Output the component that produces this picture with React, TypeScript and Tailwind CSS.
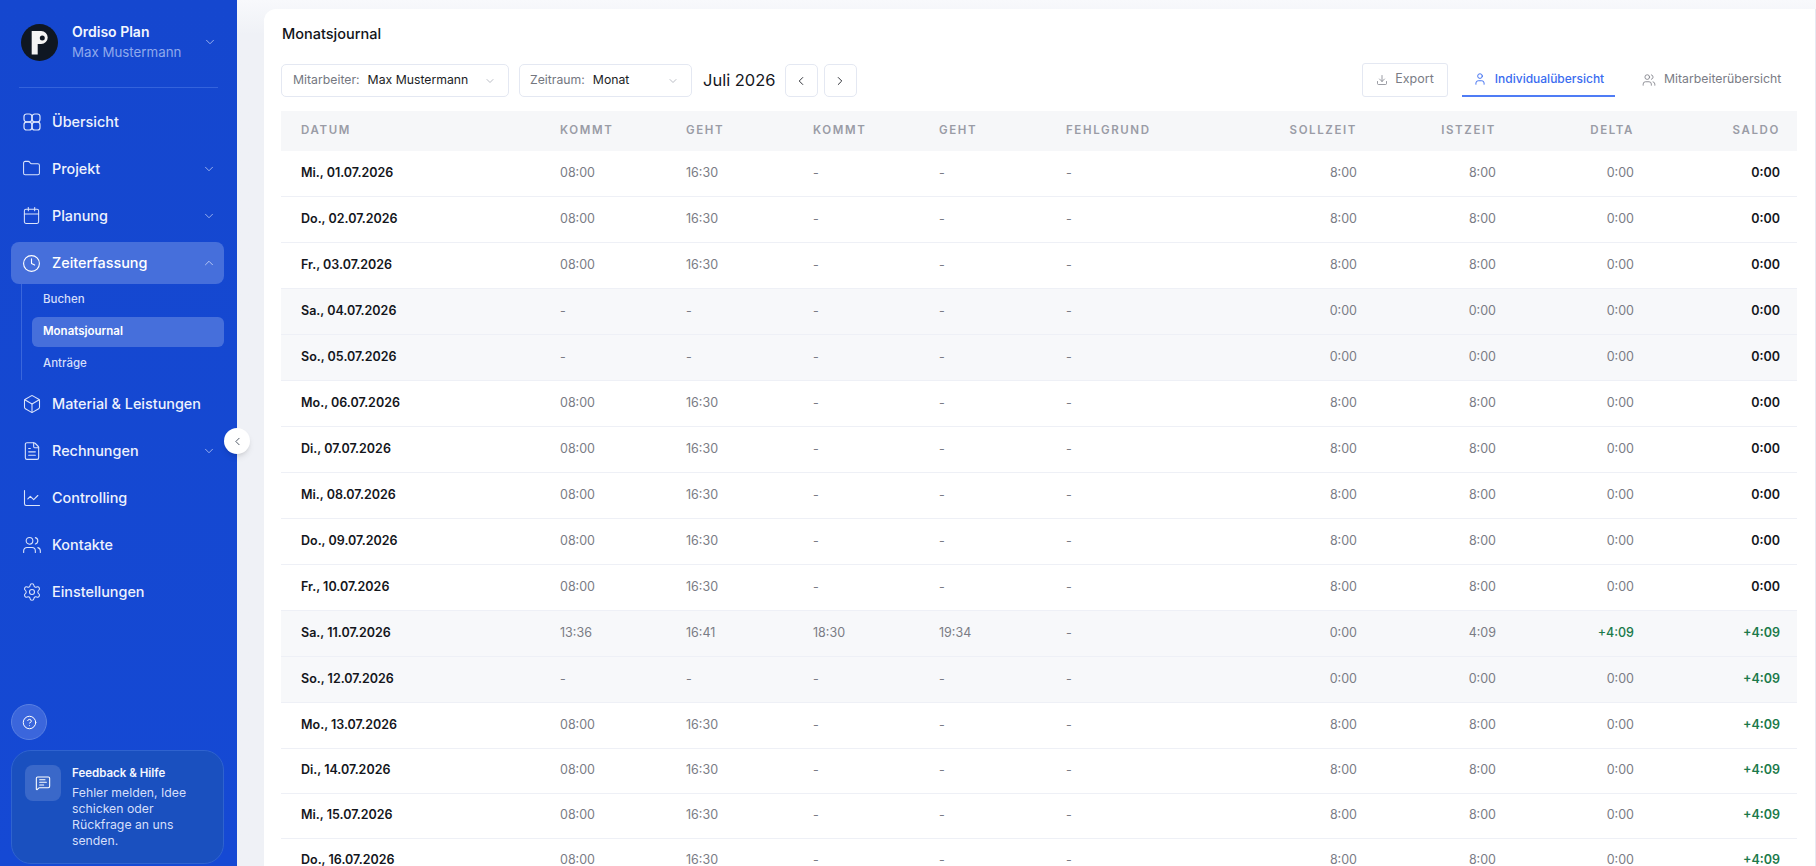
import React from "react";
import {
  Box,
  Calendar,
  ChartLine,
  ChevronDown,
  ChevronLeft,
  ChevronRight,
  ChevronUp,
  CircleHelp,
  Clock,
  Download,
  FileText,
  Folder,
  MessageSquareText,
  Settings,
  User,
  Users,
} from "lucide-react";

const OverviewIcon = ({ size = 18 }: { size?: number }) => (
  <svg width={size} height={size} viewBox="0 0 18 18" fill="none" stroke="currentColor" strokeWidth="1.2">
    <rect x="1" y="1" width="7.8" height="7.8" rx="2.6" />
    <rect x="9.2" y="1" width="7.8" height="7.8" rx="2.6" />
    <rect x="1" y="9.2" width="7.8" height="7.8" rx="2.6" />
    <rect x="9.2" y="9.2" width="7.8" height="7.8" rx="2.6" />
  </svg>
);

const Logo = () => (
  <svg width="37" height="37" viewBox="0 0 37 37">
    <circle cx="18.5" cy="18.5" r="18.5" fill="#0f1722" />
    <path d="M10.7 7h9.5a6.5 6.5 0 0 1 0 13h-3.5v10.6h-6z" fill="#f4f4f4" />
    <circle cx="21.3" cy="14" r="2.5" fill="#0f1722" />
  </svg>
);

const navTop = [
  { label: "Übersicht", icon: <OverviewIcon />, chevron: false },
  { label: "Projekt", icon: <Folder size={19} strokeWidth={1.3} />, chevron: true },
  { label: "Planung", icon: <Calendar size={19} strokeWidth={1.3} />, chevron: true },
];

const navBottom = [
  { label: "Material & Leistungen", icon: <Box size={20} strokeWidth={1.3} />, chevron: false },
  { label: "Rechnungen", icon: <FileText size={20} strokeWidth={1.3} />, chevron: true },
  { label: "Controlling", icon: <ChartLine size={20} strokeWidth={1.3} />, chevron: false },
  { label: "Kontakte", icon: <Users size={20} strokeWidth={1.3} />, chevron: false },
  { label: "Einstellungen", icon: <Settings size={20} strokeWidth={1.3} />, chevron: false },
];

type Row = {
  date: string;
  k1: string;
  g1: string;
  k2: string;
  g2: string;
  soll: string;
  ist: string;
  delta: string;
  saldo: string;
  weekend?: boolean;
};

const work = (date: string, saldo: string): Row => ({
  date,
  k1: "08:00",
  g1: "16:30",
  k2: "-",
  g2: "-",
  soll: "8:00",
  ist: "8:00",
  delta: "0:00",
  saldo,
});

const free = (date: string, saldo: string): Row => ({
  date,
  k1: "-",
  g1: "-",
  k2: "-",
  g2: "-",
  soll: "0:00",
  ist: "0:00",
  delta: "0:00",
  saldo,
  weekend: true,
});

const rows: Row[] = [
  work("Mi., 01.07.2026", "0:00"),
  work("Do., 02.07.2026", "0:00"),
  work("Fr., 03.07.2026", "0:00"),
  free("Sa., 04.07.2026", "0:00"),
  free("So., 05.07.2026", "0:00"),
  work("Mo., 06.07.2026", "0:00"),
  work("Di., 07.07.2026", "0:00"),
  work("Mi., 08.07.2026", "0:00"),
  work("Do., 09.07.2026", "0:00"),
  work("Fr., 10.07.2026", "0:00"),
  {
    date: "Sa., 11.07.2026",
    k1: "13:36",
    g1: "16:41",
    k2: "18:30",
    g2: "19:34",
    soll: "0:00",
    ist: "4:09",
    delta: "+4:09",
    saldo: "+4:09",
    weekend: true,
  },
  free("So., 12.07.2026", "+4:09"),
  work("Mo., 13.07.2026", "+4:09"),
  work("Di., 14.07.2026", "+4:09"),
  work("Mi., 15.07.2026", "+4:09"),
  work("Do., 16.07.2026", "+4:09"),
];

const NavItem = ({ label, icon, chevron }: { label: string; icon: React.ReactNode; chevron: boolean }) => (
  <div className="flex h-[47px] items-center pl-[21px] pr-[21px] text-[14.4px] font-medium text-[#eef2fd]">
    <span className="flex w-[21px] justify-center text-[#dbe4fb]">{icon}</span>
    <span className="ml-[10px] flex-1">{label}</span>
    {chevron && <ChevronDown size={14} strokeWidth={1.5} className="text-[#a9bdf2]" />}
  </div>
);

const Sidebar = () => (
  <aside className="relative flex h-full w-[237px] shrink-0 flex-col bg-gradient-to-b from-[#1547cf] to-[#1549d4]">
    <div className="mx-[19px] flex h-[88px] items-center border-b border-[#3463dc] pb-[3px] pl-[2px]">
      <Logo />
      <div className="ml-[14px] flex-1">
        <div className="text-[14px] font-semibold leading-[20px] text-[#f3f6fe]">Ordiso Plan</div>
        <div className="text-[13.3px] leading-[20px] text-[#8fa9ec]">Max Mustermann</div>
      </div>
      <ChevronDown size={14} strokeWidth={1.5} className="mr-[1px] text-[#a9bdf2]" />
    </div>

    <nav className="mt-[10px]">
      {navTop.map((item) => (
        <NavItem key={item.label} {...item} />
      ))}
      <div className="ml-[11px] mr-[13px] mt-[3px] flex h-[42px] items-center rounded-[8px] bg-[#466fdb] pl-[10px] pr-[8px] text-[14.4px] font-medium text-white">
        <span className="flex w-[21px] justify-center">
          <Clock size={19} strokeWidth={1.4} />
        </span>
        <span className="ml-[10px] flex-1">Zeiterfassung</span>
        <ChevronUp size={14} strokeWidth={1.5} className="text-[#c2d0f6]" />
      </div>
      <div className="ml-[21px] mr-[13px] h-[96px] border-l border-[#3a67dc] pl-[10px]">
        <div className="flex h-[33px] items-center pb-[1px] pl-[11px] text-[11.5px] font-medium text-[#d5dffa]">Buchen</div>
        <div className="flex h-[30px] items-center rounded-[6px] bg-[#466fdb] pl-[11px] text-[11.5px] font-semibold text-white">
          Monatsjournal
        </div>
        <div className="flex h-[33px] items-center pl-[11px] text-[11.5px] font-medium text-[#d5dffa]">Anträge</div>
      </div>
      {navBottom.map((item) => (
        <NavItem key={item.label} {...item} />
      ))}
    </nav>

    <div className="mt-auto pb-[2px] pl-[11px] pr-[13px]">
      <div className="flex h-[36px] w-[36px] items-center justify-center rounded-full border border-[#5a80e2] bg-[#3b66dc] text-white">
        <CircleHelp size={15} strokeWidth={1.6} />
      </div>
      <div className="mt-[10px] flex h-[114px] rounded-[20px] border border-[#2f63cf] bg-[#1a50bf] pl-[13px] pt-[14px]">
        <div className="flex h-[36px] w-[36px] shrink-0 items-center justify-center rounded-[8px] bg-[#3a68c9] text-white">
          <MessageSquareText size={16} strokeWidth={1.6} />
        </div>
        <div className="ml-[11px]">
          <div className="text-[11.5px] font-semibold leading-[16px] text-[#f3f6fe]">Feedback &amp; Hilfe</div>
          <p className="mt-[4px] text-[12.25px] leading-[16px] text-[#d5dffa]">
            Fehler melden, Idee
            <br />
            schicken oder
            <br />
            Rückfrage an uns
            <br />
            senden.
          </p>
        </div>
      </div>
    </div>

    <button className="absolute right-[-13px] top-[428px] flex h-[26px] w-[26px] items-center justify-center rounded-full bg-white text-[#374151] shadow-md">
      <ChevronLeft size={13} strokeWidth={1.6} />
    </button>
  </aside>
);

const Select = ({ label, value, className }: { label: string; value: string; className: string }) => (
  <div className={`flex h-[33px] items-center rounded-[5px] border border-[#e4e8f2] bg-white pr-[12px] text-[12.25px] ${className}`}>
    <span className="text-[#74777f]">{label}</span>
    <span className="ml-[8px] flex-1 whitespace-nowrap text-[#1b1d24]">{value}</span>
    <ChevronDown size={12} strokeWidth={1.5} className="text-[#a3a7b1]" />
  </div>
);

const th = "text-[11.5px] font-semibold uppercase tracking-[0.14em] text-[#9a9ca6] px-[17px]";
const td = "px-[17px] text-[12.5px] text-[#7a7c85]";

const Journal = () => (
  <table className="w-[1516px] table-fixed border-collapse">
    <colgroup>
      <col className="w-[262px]" />
      <col className="w-[126px]" />
      <col className="w-[127px]" />
      <col className="w-[126px]" />
      <col className="w-[127px]" />
      <col className="w-[186px]" />
      <col className="w-[139px]" />
      <col className="w-[139px]" />
      <col className="w-[138px]" />
      <col className="w-[146px]" />
    </colgroup>
    <thead>
      <tr className="h-[40px] bg-[#f6f7f9]">
        <th className={`${th} !pl-[20px] text-left`}>Datum</th>
        <th className={`${th} text-left`}>Kommt</th>
        <th className={`${th} text-left`}>Geht</th>
        <th className={`${th} text-left`}>Kommt</th>
        <th className={`${th} text-left`}>Geht</th>
        <th className={`${th} text-left`}>Fehlgrund</th>
        <th className={`${th} text-right`}>Sollzeit</th>
        <th className={`${th} text-right`}>Istzeit</th>
        <th className={`${th} text-right`}>Delta</th>
        <th className={`${th} text-right`}>Saldo</th>
      </tr>
    </thead>
    <tbody>
      {rows.map((row, i) => (
        <tr
          key={row.date}
          className={`border-b border-[#eef0f6] ${i === 0 || i > 12 ? "h-[45px]" : "h-[46px]"} ${
            row.weekend ? "bg-[#f7f8fa]" : "bg-white"
          }`}
        >
          <td className="pl-[20px] pr-[17px] text-[12.5px] font-semibold text-[#14161c]">{row.date}</td>
          <td className={td}>{row.k1}</td>
          <td className={td}>{row.g1}</td>
          <td className={td}>{row.k2}</td>
          <td className={td}>{row.g2}</td>
          <td className={td}>-</td>
          <td className={`${td} text-right`}>{row.soll}</td>
          <td className={`${td} text-right`}>{row.ist}</td>
          <td className={`${td} text-right ${row.delta.startsWith("+") ? "font-medium !text-[#1b7a4b]" : ""}`}>
            {row.delta}
          </td>
          <td
            className={`px-[17px] text-right text-[12.5px] font-semibold ${
              row.saldo.startsWith("+") ? "text-[#1b7a4b]" : "text-[#14161c]"
            }`}
          >
            {row.saldo}
          </td>
        </tr>
      ))}
    </tbody>
  </table>
);

export default function App() {
  return (
    <div className="flex h-screen w-full overflow-hidden bg-gradient-to-b from-[#f8f9fc] to-[#eff1f6] to-[4%] font-['Inter',sans-serif]">
      <Sidebar />
      <main className="ml-[27px] mt-[9px] flex-1 overflow-hidden rounded-tl-[12px] border-r border-[#e6e9f2] bg-white pl-[17px]">
        <h1 className="flex h-[50px] items-center pl-[1px] text-[14.5px] font-medium text-[#111318]">Monatsjournal</h1>
        <div className="mt-[5px] flex h-[33px] w-[1516px] items-center">
          <Select label="Mitarbeiter:" value="Max Mustermann" className="w-[228px] pl-[11px]" />
          <Select label="Zeitraum:" value="Monat" className="ml-[10px] w-[173px] pl-[10px]" />
          <span className="ml-[11px] text-[16.5px] text-[#15171d]">Juli 2026</span>
          <button className="ml-[9px] flex h-[33px] w-[33px] items-center justify-center rounded-[5px] border border-[#e4e8f2] text-[#24262c]">
            <ChevronLeft size={14} strokeWidth={1.6} />
          </button>
          <button className="ml-[6px] flex h-[33px] w-[33px] items-center justify-center rounded-[5px] border border-[#e4e8f2] text-[#24262c]">
            <ChevronRight size={14} strokeWidth={1.6} />
          </button>
          <button className="mb-[2px] ml-auto flex h-[34px] w-[86px] items-center justify-center gap-[7px] rounded-[3px] border border-[#e4e8f2] text-[12.5px] text-[#7a7c85]">
            <Download size={12} strokeWidth={1.5} />
            Export
          </button>
          <div className="mb-[2px] ml-[14px] flex h-[34px] w-[153px] items-center justify-center gap-[8px] border-b-2 border-[#4f7cf5] text-[12px] font-medium text-[#3a6cf0]">
            <User size={14} strokeWidth={1.6} />
            Individualübersicht
          </div>
          <div className="mb-[2px] flex h-[34px] w-[182px] items-center gap-[8px] pl-[27px] text-[12.25px] text-[#7a7c85]">
            <Users size={14} strokeWidth={1.4} />
            Mitarbeiterübersicht
          </div>
        </div>
        <div className="mt-[14px]">
          <Journal />
        </div>
      </main>
    </div>
  );
}
